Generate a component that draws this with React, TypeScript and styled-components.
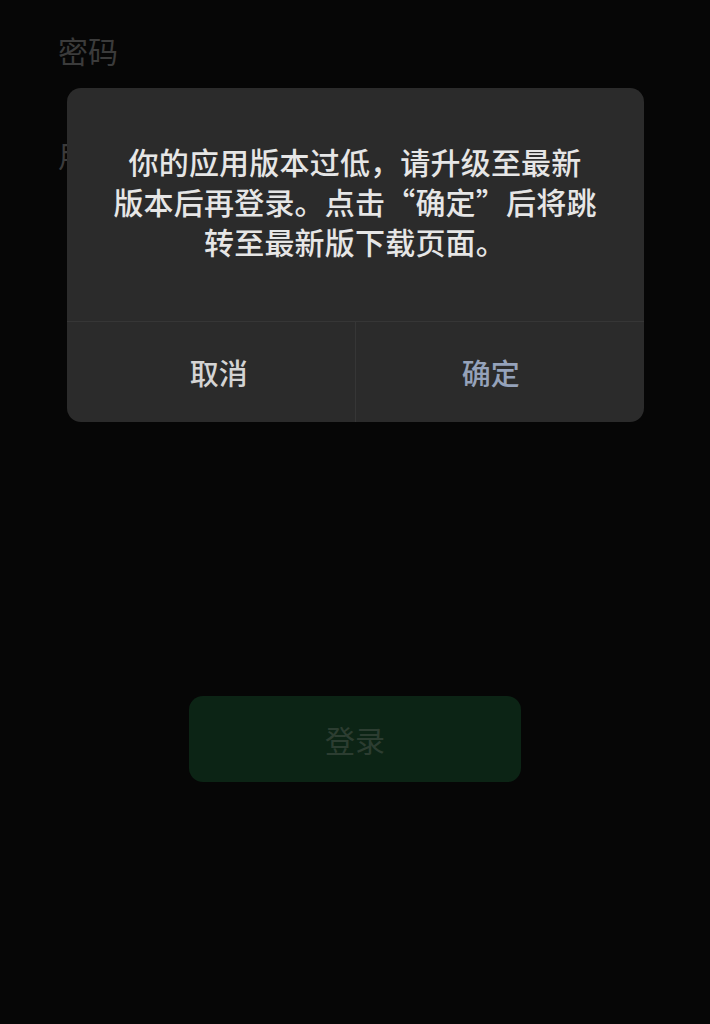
import styled, { createGlobalStyle } from "styled-components";

const GlobalStyle = createGlobalStyle`
  html, body {
    margin: 0;
    padding: 0;
    background: #060606;
  }
  body {
    font-family: "Noto Sans CJK SC", "Noto Sans", sans-serif;
  }
`;

const Page = styled.main`
  position: relative;
  width: 710px;
  height: 1024px;
  overflow: hidden;
  background: #060606;
  display: flex;
  flex-direction: column;
  padding: 29px 58px 0;
  box-sizing: border-box;
`;

const FieldLabel = styled.div`
  font-size: 30px;
  line-height: 42px;
  color: #3b3b3b;
`;

const Form = styled.div`
  display: flex;
  flex-direction: column;
  gap: 62px;
`;

const LoginButton = styled.button`
  align-self: center;
  margin-top: 521px;
  width: 332px;
  height: 86px;
  border: none;
  border-radius: 14px;
  background: #0c2415;
  color: #2c3d31;
  font-family: inherit;
  font-size: 30px;
`;

const Overlay = styled.div`
  position: absolute;
  inset: 0;
  display: flex;
  justify-content: center;
  align-items: flex-start;
  padding-top: 88px;
`;

const Dialog = styled.div`
  width: 577px;
  background: #2b2b2b;
  border-radius: 14px;
  overflow: hidden;
  display: flex;
  flex-direction: column;
`;

const Message = styled.p`
  margin: 0;
  padding: 53px 10px 60px;
  text-align: center;
  font-size: 30px;
  letter-spacing: 0.2px;
  font-weight: 500;
  line-height: 40px;
  color: #e6e6e6;
`;

const Actions = styled.div`
  display: grid;
  grid-template-columns: 1fr 1fr;
  border-top: 1px solid #363636;
`;

const Action = styled.button<{ $primary?: boolean }>`
  height: 100px;
  border: none;
  background: transparent;
  font-family: inherit;
  font-size: 29px;
  font-weight: 500;
  padding: ${({ $primary }) => ($primary ? "0 18px 0 0" : "0 0 0 16px")};
  color: ${({ $primary }) => ($primary ? "#95a2ba" : "#d4d4d4")};
  & + & {
    border-left: 1px solid #363636;
  }
`;

export default function App() {
  return (
    <>
      <GlobalStyle />
      <Page>
        <Form>
          <FieldLabel>密码</FieldLabel>
          <FieldLabel>用户名</FieldLabel>
        </Form>
        <LoginButton>登录</LoginButton>
        <Overlay>
          <Dialog>
            <Message>
              你的应用版本过低，请升级至最新
              <br />
              版本后再登录。点击“确定”后将跳
              <br />
              转至最新版下载页面。
            </Message>
            <Actions>
              <Action>取消</Action>
              <Action $primary>确定</Action>
            </Actions>
          </Dialog>
        </Overlay>
      </Page>
    </>
  );
}
